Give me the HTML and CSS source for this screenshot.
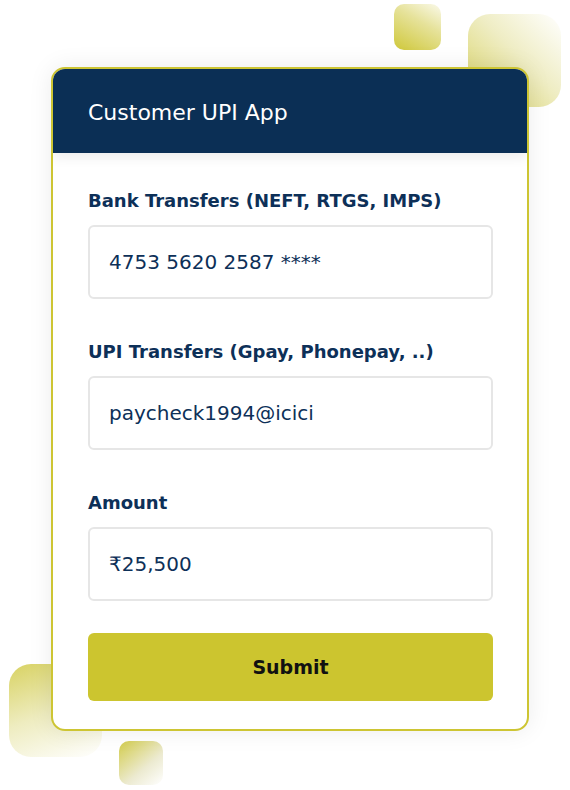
FILE: index.html
```html
<!DOCTYPE html>
<html lang="en">
<head>
    <meta charset="UTF-8">
    <meta name="viewport" content="width=device-width, initial-scale=1.0">
    <title>Customer UPI App</title>
    <link rel="stylesheet" href="styles.css">
</head>
<body>
    <div class="stage">
        <div class="blob blob-top-small"></div>
        <div class="blob blob-top-big"></div>
        <div class="blob blob-bottom-big"></div>
        <div class="blob blob-bottom-small"></div>

        <div class="card">
            <div class="card-header">Customer UPI App</div>
            <form class="card-body" onsubmit="return false;">
                <label class="field">
                    <span class="field-label">Bank Transfers (NEFT, RTGS, IMPS)</span>
                    <input class="field-input" type="text" value="4753 5620 2587 ****">
                </label>
                <label class="field">
                    <span class="field-label">UPI Transfers (Gpay, Phonepay, ..)</span>
                    <input class="field-input" type="text" value="paycheck1994@icici">
                </label>
                <label class="field">
                    <span class="field-label">Amount</span>
                    <input class="field-input" type="text" value="₹25,500">
                </label>
                <button class="submit-btn" type="submit">Submit</button>
            </form>
        </div>
    </div>
</body>
</html>
```

FILE: styles.css
```css
body {
    margin: 0;
    background: #ffffff;
    font-family: "DejaVu Sans", "Noto Sans", sans-serif;
}
.stage {
    position: relative;
    width: 570px;
    height: 790px;
    overflow: hidden;
}
.blob {
    position: absolute;
}
.blob-top-small {
    left: 394px;
    top: 4px;
    width: 47px;
    height: 46px;
    border-radius: 10px;
    background: linear-gradient(30deg, #cfc83a 0%, #e6e29a 60%, #faf9ea 100%);
}
.blob-top-big {
    left: 468px;
    top: 14px;
    width: 93px;
    height: 93px;
    border-radius: 22px;
    background: linear-gradient(225deg, #ffffff 0%, #efedc4 45%, #d8d262 100%);
}
.blob-bottom-big {
    left: 9px;
    top: 664px;
    width: 93px;
    height: 93px;
    border-radius: 22px;
    background: linear-gradient(160deg, #d8d262 0%, #eeecbf 50%, #ffffff 100%);
}
.blob-bottom-small {
    left: 119px;
    top: 741px;
    width: 44px;
    height: 44px;
    border-radius: 10px;
    background: linear-gradient(140deg, #d2cc4c 0%, #ecead0 60%, #ffffff 100%);
}
.card {
    position: relative;
    margin: 67px 0 0 51px;
    width: 478px;
    box-sizing: border-box;
    border: 2px solid #cdc533;
    border-radius: 14px;
    background: #ffffff;
    overflow: hidden;
    box-shadow: 0 0 24px rgba(0, 0, 0, 0.08);
}
.card-header {
    height: 84px;
    display: flex;
    align-items: center;
    padding: 2px 35px 0;
    box-sizing: border-box;
    background: #0b2f55;
    color: #ffffff;
    font-size: 22px;
    box-shadow: 0 4px 12px rgba(0, 0, 0, 0.08);
}
.card-body {
    display: flex;
    flex-direction: column;
    padding: 34px 34px 28px 35px;
}
.field {
    display: flex;
    flex-direction: column;
    margin-bottom: 39px;
}
.field-label {
    color: #0d3058;
    font-size: 18px;
    font-weight: 700;
    line-height: 27px;
    margin-bottom: 11px;
}
.field-input {
    height: 74px;
    box-sizing: border-box;
    border: 2px solid #e6e6e6;
    border-radius: 6px;
    padding: 0 19px;
    font-family: inherit;
    font-size: 20px;
    color: #0d3058;
    background: #ffffff;
    outline: none;
}
.field:nth-of-type(3) {
    margin-bottom: 32px;
}
.submit-btn {
    height: 68px;
    border: none;
    border-radius: 6px;
    background: #ccc52f;
    color: #111111;
    font-family: inherit;
    font-size: 19px;
    font-weight: 700;
    cursor: pointer;
}
```
